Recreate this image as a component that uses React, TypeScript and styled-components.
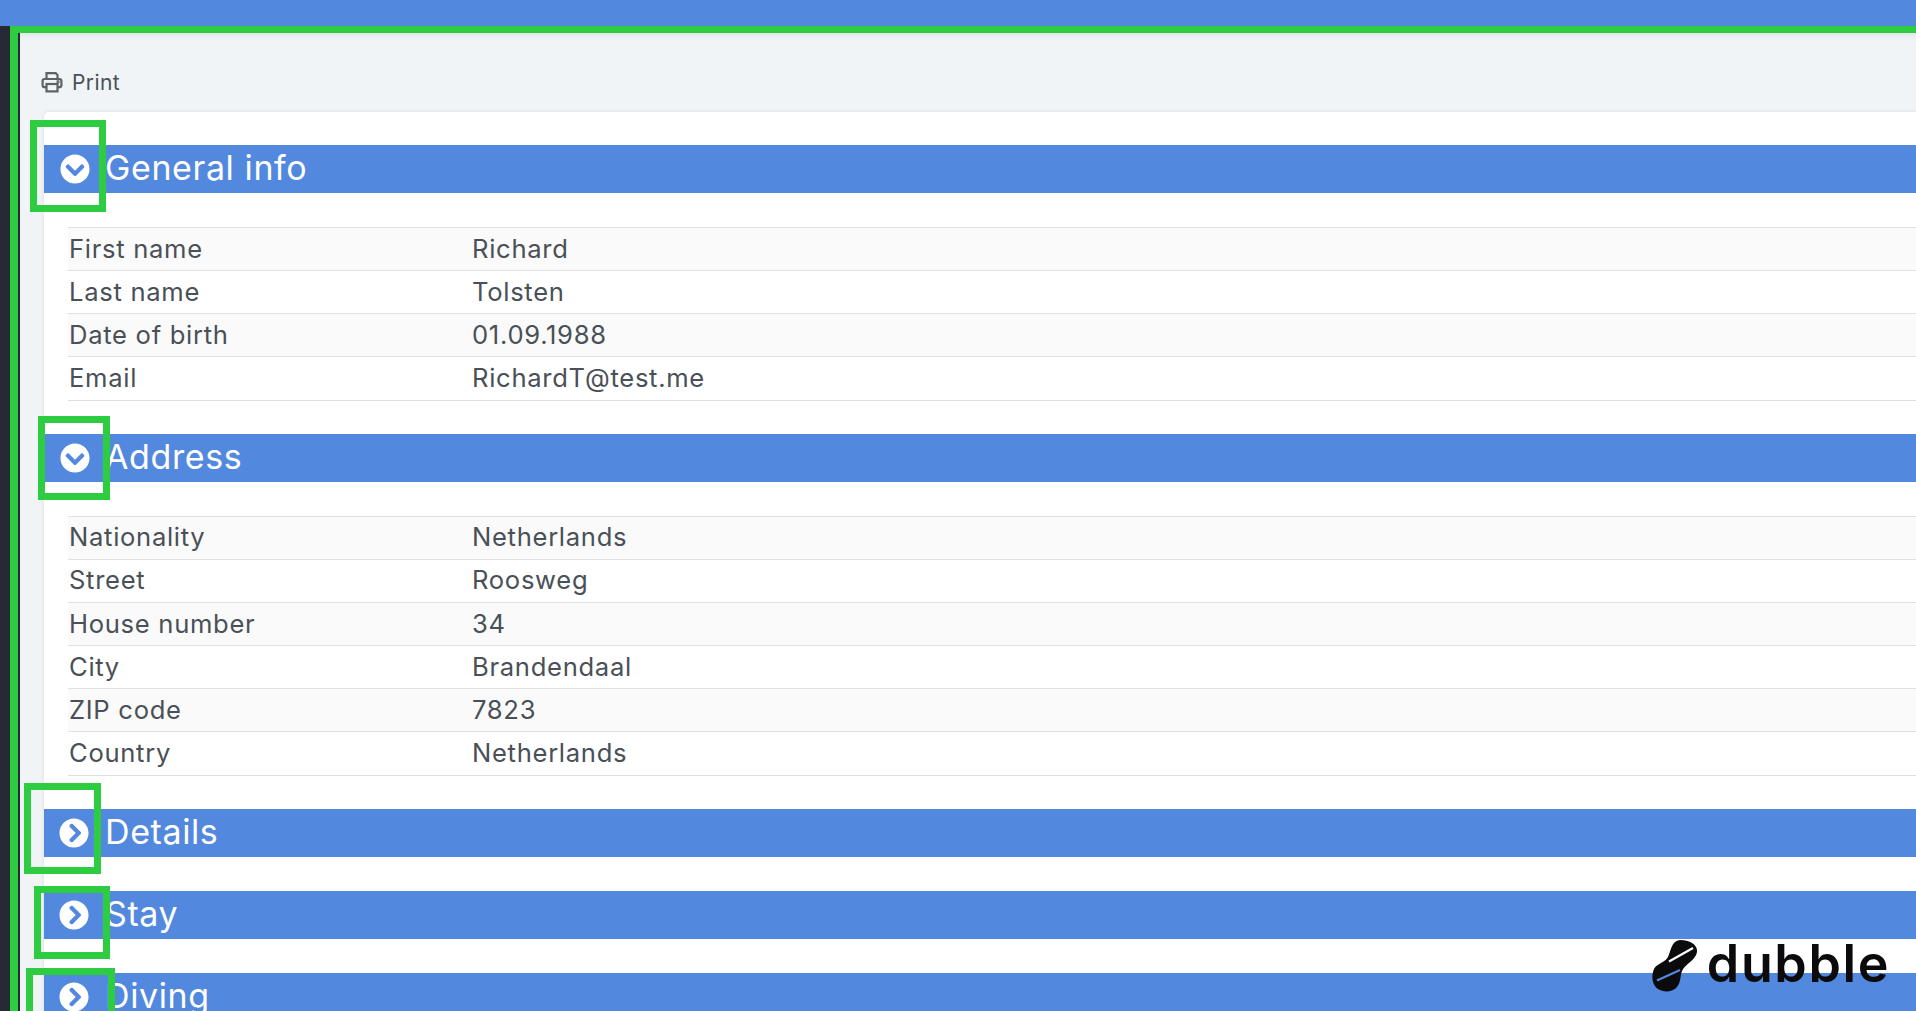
import React from "react";
import styled, { createGlobalStyle } from "styled-components";
import { FaChevronCircleDown, FaChevronCircleRight } from "react-icons/fa";

const GlobalStyle = createGlobalStyle`
  html, body {
    margin: 0;
    padding: 0;
    height: 1011px;
    overflow: hidden;
    background: #f0f4f7;
    font-family: "Inter", "Liberation Sans", sans-serif;
  }
`;

const Page = styled.div`
  position: relative;
  width: 1916px;
  height: 1011px;
  overflow: hidden;
  display: flex;
  flex-direction: column;
`;

const TopBar = styled.div`
  height: 26px;
  flex: none;
  background: #5288dd;
`;

const Body = styled.div`
  flex: 1;
  display: flex;
  min-height: 0;
`;

const Sidebar = styled.div`
  width: 10px;
  flex: none;
  background: #272a35;
`;

const Frame = styled.div`
  flex: 1;
  min-width: 0;
  border-top: 7px solid #2ecc40;
  border-left: 8px solid #2ecc40;
`;

const Content = styled.main`
  height: 100%;
  border-left: 2px solid #272a35;
  background: #f0f4f7;
  box-shadow: inset 0 6px 6px -4px rgba(0, 0, 0, 0.08);
  padding-left: 24px;
`;

const PrintLink = styled.div`
  height: 79px;
  box-sizing: border-box;
  display: flex;
  align-items: center;
  gap: 9px;
  margin-left: -3px;
  padding-top: 19px;
  color: #495057;
  font-size: 21px;
  letter-spacing: 0.4px;
`;

const Card = styled.div`
  background: #fff;
  border-top-left-radius: 5px;
  padding-top: 33px;
  box-shadow: 0 0 4px rgba(0, 0, 0, 0.1);
`;

const Header = styled.div<{ $open: boolean }>`
  position: relative;
  height: 48px;
  display: flex;
  align-items: center;
  background: #5288dd;
  color: #fff;
  font-size: 34px;
  letter-spacing: 0.6px;
  padding-left: ${(p) => (p.$open ? 16 : 15)}px;
  gap: ${(p) => (p.$open ? 15 : 16)}px;
  margin-bottom: 34px;
`;

const Title = styled.span`
  line-height: 46px;
  padding-bottom: 2px;
`;

const Highlight = styled.div<{ $left: number; $top: number; $width: number; $height: number }>`
  position: absolute;
  left: ${(p) => p.$left}px;
  top: ${(p) => p.$top}px;
  width: ${(p) => p.$width}px;
  height: ${(p) => p.$height}px;
  box-sizing: border-box;
  border: 7px solid #2ecc40;
`;

const Table = styled.div`
  margin-left: 24px;
  border-bottom: 1px solid #dee2e6;
  margin-bottom: 33px;
`;

const Row = styled.div<{ $striped: boolean }>`
  height: 43.17px;
  box-sizing: border-box;
  display: grid;
  grid-template-columns: 403px 1fr;
  align-items: center;
  border-top: 1px solid #dee2e6;
  padding: 0 0 2px 1px;
  font-size: 25.6px;
  letter-spacing: 0.7px;
  color: #495057;
  background: ${(p) => (p.$striped ? "#fafafa" : "#fff")};
`;

const Logo = styled.div`
  position: absolute;
  right: 26px;
  top: 940px;
  display: flex;
  align-items: flex-start;
  gap: 9px;
  color: #0b0b0d;
`;

const LogoName = styled.span`
  margin-top: -2px;
  font-size: 52px;
  font-weight: 600;
  letter-spacing: 1.6px;
  line-height: 52px;
`;

const PrinterIcon = () => (
  <svg width="22" height="22" viewBox="0 0 22 22" fill="none" stroke="#5c6268" strokeWidth="2.2">
    <path d="M5.5 8V2.2h9.2L16.5 4v4" />
    <rect x="1.6" y="8" width="18.8" height="8.2" rx="2" />
    <rect x="5.5" y="13" width="11" height="7.4" fill="#f0f4f7" />
    <circle cx="17" cy="10.8" r="0.6" fill="#5c6268" />
  </svg>
);

const LogoMark = () => (
  <svg width="46" height="52" viewBox="0 0 46 52">
    <path
      d="M28 0C38 0 46 5 45 12C44 20 33 24 30 31C28 36 29 42 25 47C21 52 12 53 6 49C0 45 -1 36 2 29C5 23 13 23 16 17C19 11 19 1 28 0Z"
      fill="#0b0b0d"
    />
    <path d="M17 21.5L41 8" stroke="#fff" strokeWidth="2.2" />
    <path d="M5 40.5L28 30" stroke="#5288dd" strokeWidth="2.2" />
  </svg>
);

type Field = [string, string];

const general: Field[] = [
  ["First name", "Richard"],
  ["Last name", "Tolsten"],
  ["Date of birth", "01.09.1988"],
  ["Email", "RichardT@test.me"],
];

const address: Field[] = [
  ["Nationality", "Netherlands"],
  ["Street", "Roosweg"],
  ["House number", "34"],
  ["City", "Brandendaal"],
  ["ZIP code", "7823"],
  ["Country", "Netherlands"],
];

type Box = { left: number; top: number; width: number; height: number };

const InfoSection = (props: { title: string; open?: boolean; box: Box; fields?: Field[] }) => {
  const { title, open, box, fields } = props;
  return (
    <section>
      <Header $open={!!open}>
        {open ? <FaChevronCircleDown size={30} /> : <FaChevronCircleRight size={30} />}
        <Title>{title}</Title>
        <Highlight $left={box.left} $top={box.top} $width={box.width} $height={box.height} />
      </Header>
      {fields && (
        <Table>
          {fields.map(([label, value], i) => (
            <Row key={label} $striped={i % 2 === 0}>
              <span>{label}</span>
              <span>{value}</span>
            </Row>
          ))}
        </Table>
      )}
    </section>
  );
};

export default function App() {
  return (
    <Page>
      <GlobalStyle />
      <TopBar />
      <Body>
        <Sidebar />
        <Frame>
          <Content>
            <PrintLink>
              <PrinterIcon />
              <span>Print</span>
            </PrintLink>
            <Card>
              <InfoSection
                title="General info"
                open
                fields={general}
                box={{ left: -14, top: -25, width: 76, height: 92 }}
              />
              <InfoSection
                title="Address"
                open
                fields={address}
                box={{ left: -6, top: -18, width: 72, height: 84 }}
              />
              <InfoSection title="Details" box={{ left: -20, top: -26, width: 77, height: 91 }} />
              <InfoSection title="Stay" box={{ left: -10, top: -5, width: 76, height: 73 }} />
              <InfoSection title="Diving" box={{ left: -18, top: -5, width: 89, height: 60 }} />
            </Card>
          </Content>
        </Frame>
      </Body>
      <Logo>
        <LogoMark />
        <LogoName>dubble</LogoName>
      </Logo>
    </Page>
  );
}
